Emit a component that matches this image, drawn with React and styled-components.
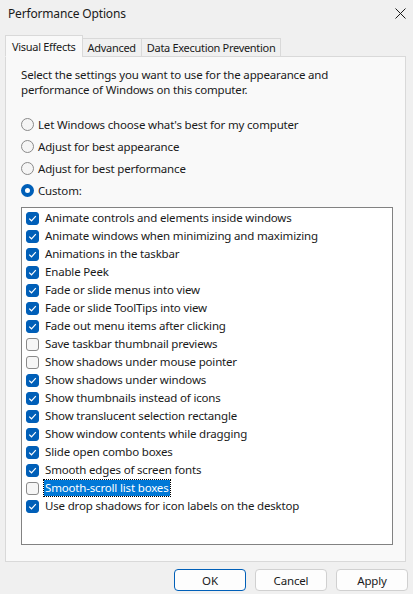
import React, { useState } from 'react';
import styled, { createGlobalStyle } from 'styled-components';

const GlobalStyle = createGlobalStyle`
  html, body {
    margin: 0;
    padding: 0;
    background: #f0f0f0;
  }
  * { box-sizing: border-box; }
`;

const Window = styled.div`
  width: 413px;
  height: 594px;
  background: #f0f0f0;
  font-family: "Noto Sans", "Open Sans", sans-serif;
  font-size: 11.5px;
  letter-spacing: -0.17px;
  color: #1a1a1a;
  display: flex;
  flex-direction: column;
`;

const TitleBar = styled.div`
  height: 26px;
  display: flex;
  align-items: center;
  justify-content: space-between;
  padding: 0 6px 0 8px;
  font-size: 12px;
`;

const CloseButton = styled.span`
  width: 14px;
  height: 14px;
  display: flex;
  align-items: center;
  justify-content: center;
`;

const TabStrip = styled.div`
  display: flex;
  align-items: flex-end;
  height: 31px;
  padding: 0 5px;
  position: relative;
  z-index: 1;
  margin-bottom: -1px;
`;

const Tab = styled.div`
  height: ${(p) => (p.$active ? '22px' : '19px')};
  padding: 0 ${(p) => (p.$active ? '6px' : '5px')};
  display: flex;
  align-items: center;
  font-size: 11px;
  letter-spacing: -0.3px;
  background: ${(p) => (p.$active ? '#f9f9f9' : '#f0f0f0')};
  border: 1px solid #d9d9d9;
  border-bottom: ${(p) => (p.$active ? '1px solid #f9f9f9' : '1px solid #d9d9d9')};
  margin-left: ${(p) => (p.$first ? '0' : '-1px')};
  white-space: nowrap;
`;

const Panel = styled.div`
  margin: 0 7px 0 5px;
  height: 506px;
  background: #f9f9f9;
  border: 1px solid #d9d9d9;
  padding: 10px 12px 16px 15px;
  display: flex;
  flex-direction: column;
`;

const Description = styled.p`
  margin: 0;
  line-height: 15px;
`;

const RadioGroup = styled.div`
  display: flex;
  flex-direction: column;
  margin-top: 16px;
`;

const RadioRow = styled.label`
  height: 22px;
  display: flex;
  align-items: center;
  gap: 4px;
`;

const RadioCircle = styled.span`
  width: 13px;
  height: 13px;
  border-radius: 50%;
  flex: none;
  border: ${(p) => (p.$on ? '4px solid #005fb8' : '1px solid #8a8a8a')};
  background: ${(p) => (p.$on ? '#ffffff' : '#f5f5f5')};
`;

const ListBox = styled.div`
  margin-top: 6px;
  flex: 1;
  background: #ffffff;
  border: 1px solid #828282;
  padding: 1px 4px;
`;

const Item = styled.div`
  height: 18px;
  display: flex;
  align-items: center;
  gap: 5px;
`;

const Box = styled.span`
  width: 13px;
  height: 13px;
  border-radius: 3px;
  flex: none;
  display: flex;
  align-items: center;
  justify-content: center;
  background: ${(p) => (p.$on ? '#005fb8' : '#f6f6f6')};
  border: 1px solid ${(p) => (p.$on ? '#005fb8' : '#8a8a8a')};
`;

const ItemText = styled.span`
  padding: 0 1px;
  line-height: 16px;
  white-space: nowrap;
  background: ${(p) => (p.$sel ? '#0078d7' : 'transparent')};
  color: ${(p) => (p.$sel ? '#ffffff' : 'inherit')};
  outline: ${(p) => (p.$sel ? '1px dotted #000000' : 'none')};
`;

const ButtonRow = styled.div`
  display: flex;
  justify-content: flex-end;
  gap: 9px;
  padding: 7px 5px 0 0;
`;

const Button = styled.button`
  width: 72px;
  height: 22px;
  font-family: inherit;
  font-size: 11.5px;
  letter-spacing: inherit;
  color: #1a1a1a;
  background: #fdfdfd;
  border: 1px solid ${(p) => (p.$primary ? '#005fb8' : '#d0d0d0')};
  border-radius: 4px;
  padding: 0;
`;

const options = [
  { label: "Let Windows choose what's best for my computer", on: false },
  { label: 'Adjust for best appearance', on: false },
  { label: 'Adjust for best performance', on: false },
  { label: 'Custom:', on: true },
];

const effects = [
  ['Animate controls and elements inside windows', true],
  ['Animate windows when minimizing and maximizing', true],
  ['Animations in the taskbar', true],
  ['Enable Peek', true],
  ['Fade or slide menus into view', true],
  ['Fade or slide ToolTips into view', true],
  ['Fade out menu items after clicking', true],
  ['Save taskbar thumbnail previews', false],
  ['Show shadows under mouse pointer', false],
  ['Show shadows under windows', true],
  ['Show thumbnails instead of icons', true],
  ['Show translucent selection rectangle', true],
  ['Show window contents while dragging', true],
  ['Slide open combo boxes', true],
  ['Smooth edges of screen fonts', true],
  ['Smooth-scroll list boxes', false],
  ['Use drop shadows for icon labels on the desktop', true],
];

function Check() {
  return (
    <svg width="9" height="9" viewBox="0 0 9 9">
      <path d="M1.2 4.6 L3.5 6.8 L7.8 2.2" fill="none" stroke="#fff" strokeWidth="1.2" />
    </svg>
  );
}

export default function App() {
  const [selected] = useState(15);

  return (
    <>
      <GlobalStyle />
      <Window>
        <TitleBar>
          <span>Performance Options</span>
          <CloseButton>
            <svg width="11" height="11" viewBox="0 0 11 11">
              <path d="M0.5 0.5 L10.5 10.5 M10.5 0.5 L0.5 10.5" stroke="#1a1a1a" strokeWidth="1" />
            </svg>
          </CloseButton>
        </TitleBar>

        <TabStrip>
          <Tab $active $first>Visual Effects</Tab>
          <Tab>Advanced</Tab>
          <Tab>Data Execution Prevention</Tab>
        </TabStrip>

        <Panel>
          <Description>
            Select the settings you want to use for the appearance and
            <br />
            performance of Windows on this computer.
          </Description>

          <RadioGroup>
            {options.map((o) => (
              <RadioRow key={o.label}>
                <RadioCircle $on={o.on} />
                {o.label}
              </RadioRow>
            ))}
          </RadioGroup>

          <ListBox>
            {effects.map(([label, on], i) => (
              <Item key={label}>
                <Box $on={on}>{on && <Check />}</Box>
                <ItemText $sel={i === selected}>{label}</ItemText>
              </Item>
            ))}
          </ListBox>
        </Panel>

        <ButtonRow>
          <Button $primary>OK</Button>
          <Button>Cancel</Button>
          <Button>Apply</Button>
        </ButtonRow>
      </Window>
    </>
  );
}
